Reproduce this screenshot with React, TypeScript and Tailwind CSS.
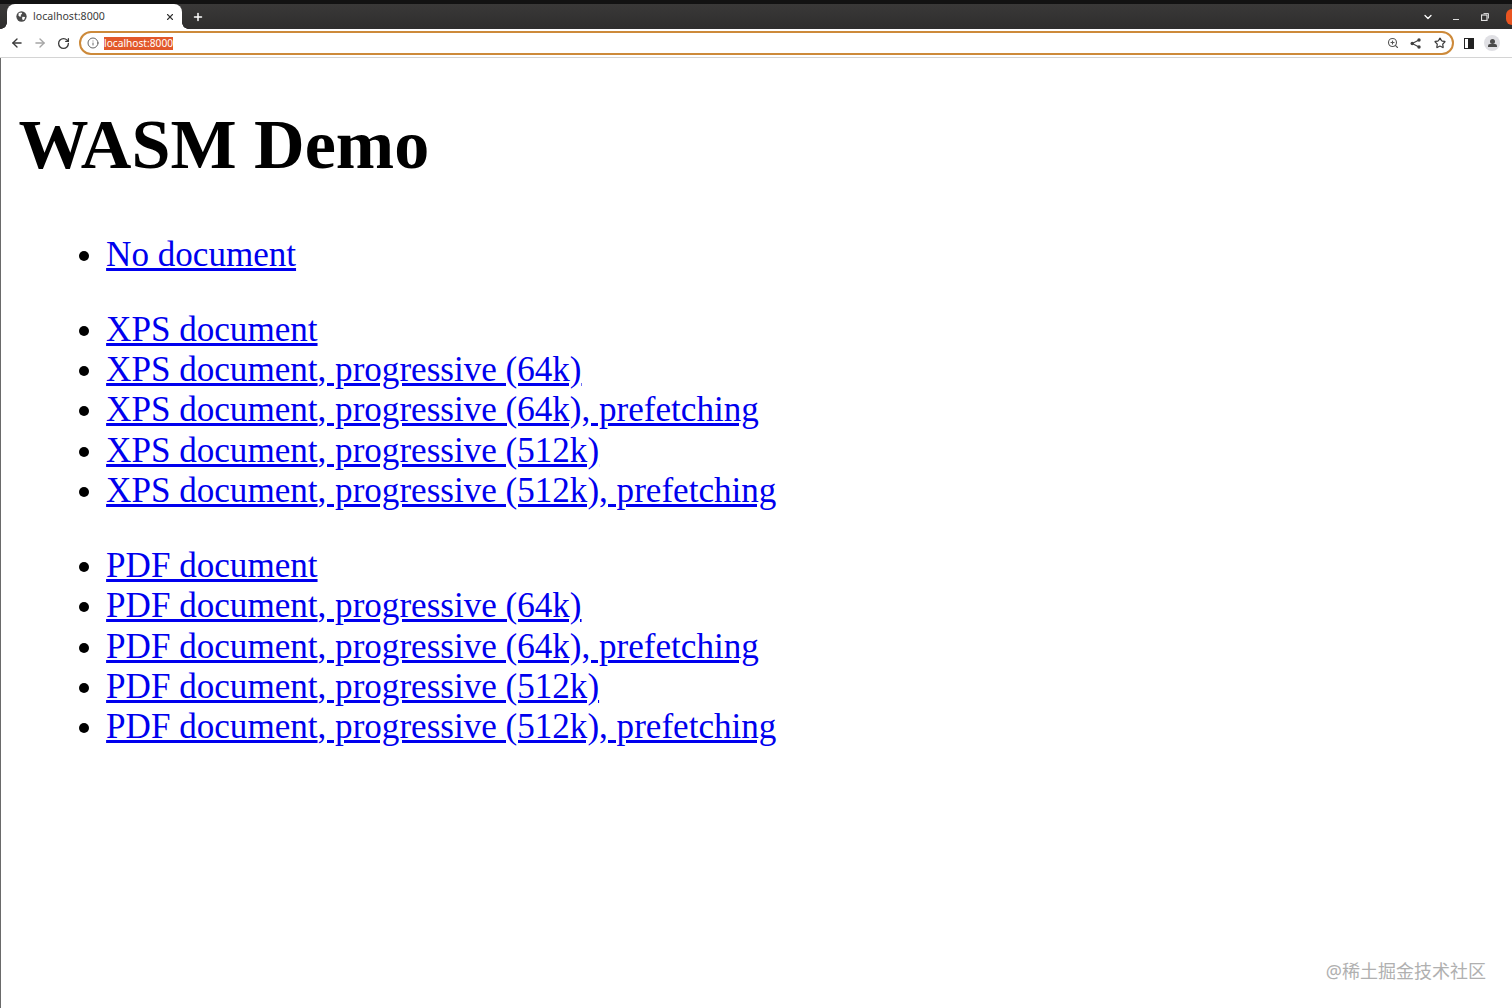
import React from "react";
import { ArrowLeft, ArrowRight, RotateCw, Info, ZoomIn, Star, ChevronDown, X, Plus } from "lucide-react";

function L({ children }: { children: React.ReactNode }) {
  return (
    <li>
      <a href="#" className="text-[#0000ee] underline">{children}</a>
    </li>
  );
}

function SolidGlobe() {
  return (
    <svg width="11" height="11" viewBox="0 0 12 12" className="shrink-0">
      <circle cx="6" cy="6" r="5.6" fill="#4a4a4a" />
      <path d="M3 2.2 L6 1.6 L6.8 3 L5 4.4 L5.8 5.6 L4.2 6.4 L2.6 5 Z M7 6.2 L10 6.6 L9 9.2 L7.4 10.2 L6.6 8 Z" fill="#fff" />
    </svg>
  );
}

function ShareIcon() {
  return (
    <svg width="11" height="11" viewBox="0 0 11 11" className="ml-[11px] shrink-0">
      <path d="M9 2 L2.2 5.5 L9 9" fill="none" stroke="#3f3f3f" strokeWidth="1.1" />
      <circle cx="9" cy="2" r="1.7" fill="#3f3f3f" />
      <circle cx="2.2" cy="5.5" r="1.7" fill="#3f3f3f" />
      <circle cx="9" cy="9" r="1.7" fill="#3f3f3f" />
    </svg>
  );
}

function RestoreIcon() {
  return (
    <svg width="8" height="8" viewBox="0 0 8 8" className="ml-[22px] shrink-0">
      <path d="M2.5 0.5 H7.5 V5.5" fill="none" stroke="#cfcfcf" strokeWidth="1" />
      <rect x="0.5" y="2" width="5.5" height="5.5" fill="none" stroke="#e2e2e2" strokeWidth="1.2" />
    </svg>
  );
}

const xps = ["", ", progressive (64k)", ", progressive (64k), prefetching", ", progressive (512k)", ", progressive (512k), prefetching"];

export default function App() {
  return (
    <div className="relative flex h-[1008px] w-[1512px] flex-col overflow-hidden bg-white font-['Liberation_Serif',serif]">
      <div className="h-[4px] shrink-0 bg-[#121212]" />
      <div className="flex h-[25px] shrink-0 items-end bg-gradient-to-b from-[#3a3938] to-[#2e2d2d]">
        <div className="relative ml-[7px] flex h-[25px] w-[175px] items-center rounded-t-[8px] bg-white pl-[9px] pr-[8px]">
          <span className="absolute bottom-0 left-[-6px] h-[6px] w-[6px] bg-[radial-gradient(circle_at_0_0,transparent_5.5px,white_6px)]" />
          <span className="absolute bottom-0 right-[-6px] h-[6px] w-[6px] bg-[radial-gradient(circle_at_100%_0,transparent_5.5px,white_6px)]" />
          <SolidGlobe />
          <span className="ml-[6px] flex-1 font-['Noto_Sans',sans-serif] text-[10.6px] text-[#3c3c3c]">localhost:8000</span>
          <X size={10} strokeWidth={2.6} className="mr-[-1px] text-[#333]" />
        </div>
        <div className="flex h-[25px] w-[32px] items-center justify-center">
          <Plus size={12} strokeWidth={3} className="text-white" />
        </div>
        <div className="flex-1" />
        <div className="flex h-[25px] items-center">
          <ChevronDown size={12} strokeWidth={2.6} className="text-white" />
          <span className="ml-[19px] mt-[5px] h-px w-[6px] bg-[#ddd]" />
          <RestoreIcon />
          <span className="ml-[17px] h-[16px] w-[6px] rounded-l-full bg-[#e95420]" />
        </div>
      </div>
      <div className="flex h-[29px] shrink-0 items-center border-b border-[#d4d4d4] bg-white">
        <ArrowLeft size={14} strokeWidth={2.3} className="ml-[10px] text-[#3a3a3a]" />
        <ArrowRight size={14} strokeWidth={2.3} className="ml-[9px] text-[#a5a5a5]" />
        <RotateCw size={13} strokeWidth={2.4} className="ml-[10px] text-[#3a3a3a]" />
        <div className="ml-[9px] flex h-[24px] w-[1375px] items-center rounded-full border-2 border-[#cd8a3a] bg-white pl-[6px] pr-[6px]">
          <Info size={12} strokeWidth={1.8} className="text-[#555]" />
          <span className="ml-[5px] bg-[#e2582a] font-['Noto_Sans',sans-serif] text-[10.2px] leading-[13px] text-white">localhost:8000</span>
          <div className="flex-1" />
          <ZoomIn size={12} strokeWidth={2.2} className="text-[#555]" />
          <ShareIcon />
          <Star size={12} strokeWidth={2.4} className="ml-[13px] text-[#3a3a3a]" />
        </div>
        <div className="ml-[10px] flex h-[11px] w-[10px] justify-end border-[1.5px] border-[#222]">
          <div className="h-full w-[5px] bg-[#222]" />
        </div>
        <div className="ml-[10px] flex h-[16px] w-[16px] items-center justify-center rounded-full bg-[#e0e0e4]">
          <div className="flex flex-col items-center">
            <div className="h-[5px] w-[5px] rounded-full bg-[#4a4a4a]" />
            <div className="h-[3px] w-[9px] rounded-t-[2px] bg-[#4a4a4a]" />
          </div>
        </div>
      </div>
      <div className="flex-1 border-l border-[#6a6a6a] pl-[17.5px] pr-[17.5px] text-[35.09px] leading-[40.25px] text-black">
        <h1 className="mt-[47px] mb-[49px] text-[70.08px] font-bold leading-[80.5px]">WASM Demo</h1>
        <ul className="mb-[35px] list-disc pl-[87.6px]">
          <L>No document</L>
        </ul>
        <ul className="mb-[35px] list-disc pl-[87.6px]">
          {xps.map((s) => <L key={s}>XPS document{s}</L>)}
        </ul>
        <ul className="list-disc pl-[87.6px]">
          {xps.map((s) => <L key={s}>PDF document{s}</L>)}
        </ul>
      </div>
      <div className="absolute bottom-[25px] right-[26px] font-['Noto_Sans','Noto_Sans_CJK_SC',sans-serif] text-[18px] leading-[24px] text-[#b0b0b0]">
        @稀土掘金技术社区
      </div>
    </div>
  );
}
